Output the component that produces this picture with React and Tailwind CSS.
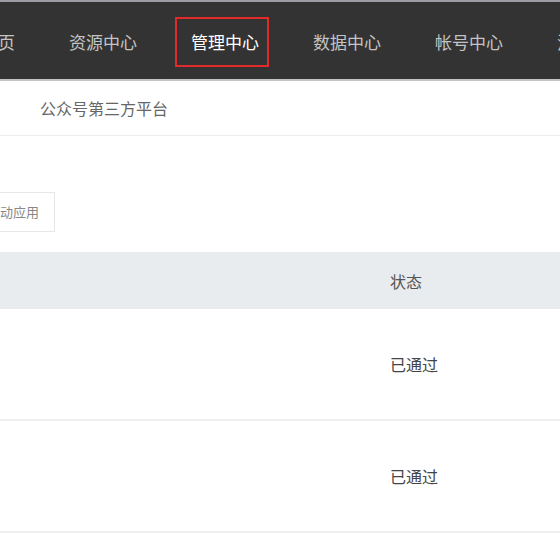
const NAV = ['首页', '资源中心', '管理中心', '数据中心', '帐号中心', '消息中心'];

const ROWS = [
  { id: 1, status: '已通过' },
  { id: 2, status: '已通过' },
];

export default function App() {
  return (
    <div
      className="w-[560px] h-[560px] overflow-hidden bg-white"
      style={{ fontFamily: '"Noto Sans CJK SC", "Noto Sans", sans-serif' }}
    >
      <div className="h-[2px] bg-[#9c9ca2]" />
      <nav className="h-[77px] bg-[#333333] flex items-center ml-[-46px] pt-[3px] whitespace-nowrap">
        {NAV.map((n) => (
          <div key={n} className="px-[27px] shrink-0 flex justify-center">
            {n === '管理中心' ? (
              <span className="ml-[-16px] mr-[-10px] border-2 border-[#e12a2a] pl-[14px] pr-[8px] h-[50px] flex items-center text-[17px] text-white">
                {n}
              </span>
            ) : (
              <span className="text-[17px] text-[#c4c4c4]">{n}</span>
            )}
          </div>
        ))}
      </nav>
      <div className="h-[2px] bg-[#c4c4c4]" />
      <div className="h-[55px] border-b border-[#ececec] flex items-center pl-[40px] text-[16px] text-[#666]">
        公众号第三方平台
      </div>
      <div className="pt-[56px]">
        <button className="ml-[-55px] h-[40px] px-[15px] border border-[#e6e6e6] bg-white text-[13px] text-[#888] whitespace-nowrap">
          创建移动应用
        </button>
      </div>
      <div className="mt-[20px]">
        <div className="h-[57px] bg-[#e9ecef] flex items-center">
          <div className="w-[390px]" />
          <div className="text-[16px] text-[#555]">状态</div>
        </div>
        {ROWS.map((r) => (
          <div key={r.id} className="h-[112px] border-b-2 border-[#f0f0f0] flex items-center">
            <div className="w-[390px]" />
            <div className="text-[16px] text-[#444]">{r.status}</div>
          </div>
        ))}
      </div>
    </div>
  );
}
